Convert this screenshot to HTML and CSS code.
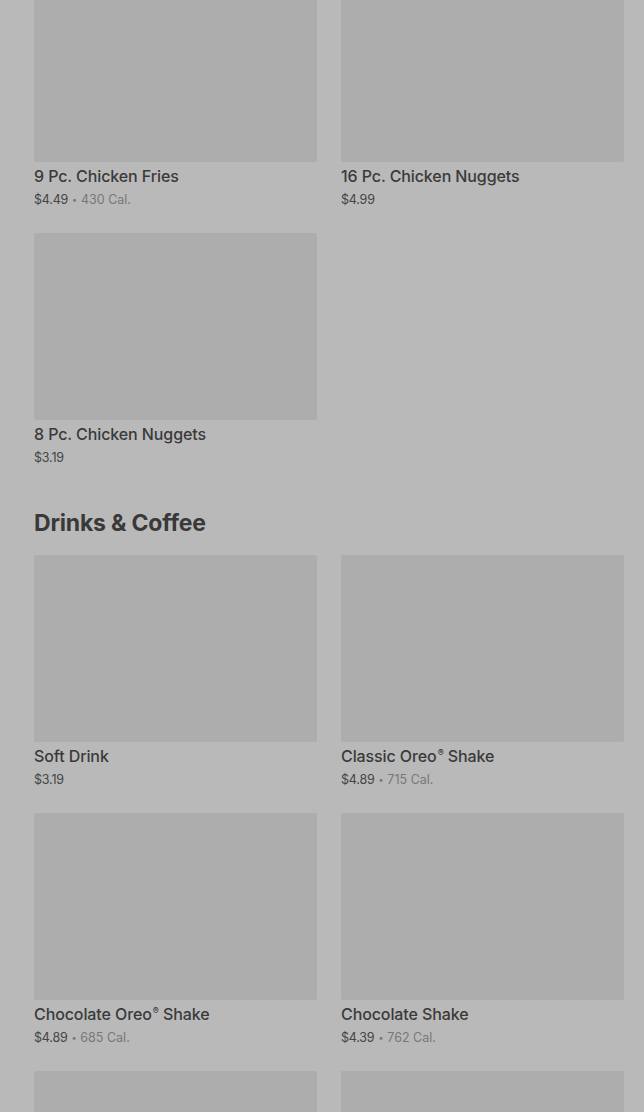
FILE: index.html
```html
<!DOCTYPE html>
<html lang="en">
<head>
    <meta charset="UTF-8">
    <meta name="viewport" content="width=device-width, initial-scale=1.0">
    <title>Menu</title>
    <link rel="stylesheet" href="styles.css">
</head>
<body>
    <main class="menu">
        <section class="grid">
            <div class="item">
                <div class="thumb"></div>
                <div class="name">9 Pc. Chicken Fries</div>
                <div class="meta">$4.49<span class="dot">•</span><span class="cal">430 Cal.</span></div>
            </div>
            <div class="item">
                <div class="thumb"></div>
                <div class="name">16 Pc. Chicken Nuggets</div>
                <div class="meta">$4.99</div>
            </div>
            <div class="item">
                <div class="thumb"></div>
                <div class="name">8 Pc. Chicken Nuggets</div>
                <div class="meta">$3.19</div>
            </div>
        </section>

        <h2 class="section-title">Drinks &amp; Coffee</h2>
        <section class="grid">
            <div class="item">
                <div class="thumb"></div>
                <div class="name">Soft Drink</div>
                <div class="meta">$3.19</div>
            </div>
            <div class="item">
                <div class="thumb"></div>
                <div class="name">Classic Oreo<sup>®</sup> Shake</div>
                <div class="meta">$4.89<span class="dot">•</span><span class="cal">715 Cal.</span></div>
            </div>
            <div class="item">
                <div class="thumb"></div>
                <div class="name">Chocolate Oreo<sup>®</sup> Shake</div>
                <div class="meta">$4.89<span class="dot">•</span><span class="cal">685 Cal.</span></div>
            </div>
            <div class="item">
                <div class="thumb"></div>
                <div class="name">Chocolate Shake</div>
                <div class="meta">$4.39<span class="dot">•</span><span class="cal">762 Cal.</span></div>
            </div>
            <div class="item">
                <div class="thumb"></div>
            </div>
            <div class="item">
                <div class="thumb"></div>
            </div>
        </section>
    </main>
</body>
</html>
```

FILE: styles.css
```css
html, body {
    height: 100%;
    overflow: hidden;
}
body {
    margin: 0;
    background-color: #b9b9b9;
    font-family: Inter, "Noto Sans", Arial, sans-serif;
    color: #3a3a3a;
}
.menu {
    margin-top: -25px;
    padding: 0 20px 0 34px;
}
.grid {
    display: grid;
    grid-template-columns: 283px 283px;
    column-gap: 24px;
}
.item {
    padding-bottom: 24px;
}
.thumb {
    height: 187px;
    background-color: #adadad;
    border-radius: 2px;
}
.name {
    margin-top: 4px;
    font-size: 16px;
    line-height: 20px;
    font-weight: 500;
    letter-spacing: -0.1px;
    color: #3a3a3a;
}
.name sup {
    font-size: 9px;
    line-height: 0;
    vertical-align: 6px;
    margin-left: 1px;
}
.meta {
    margin-top: 5px;
    font-size: 12.5px;
    line-height: 18px;
    letter-spacing: -0.2px;
    color: #444;
}
.dot {
    margin: 0 4px;
    font-size: 9px;
    vertical-align: 1px;
    color: #777;
}
.cal {
    color: #777;
    letter-spacing: 0;
}
.section-title {
    margin: 18px 0 18px;
    font-size: 23px;
    line-height: 28px;
    font-weight: 700;
    letter-spacing: -0.2px;
    color: #393939;
}
```
